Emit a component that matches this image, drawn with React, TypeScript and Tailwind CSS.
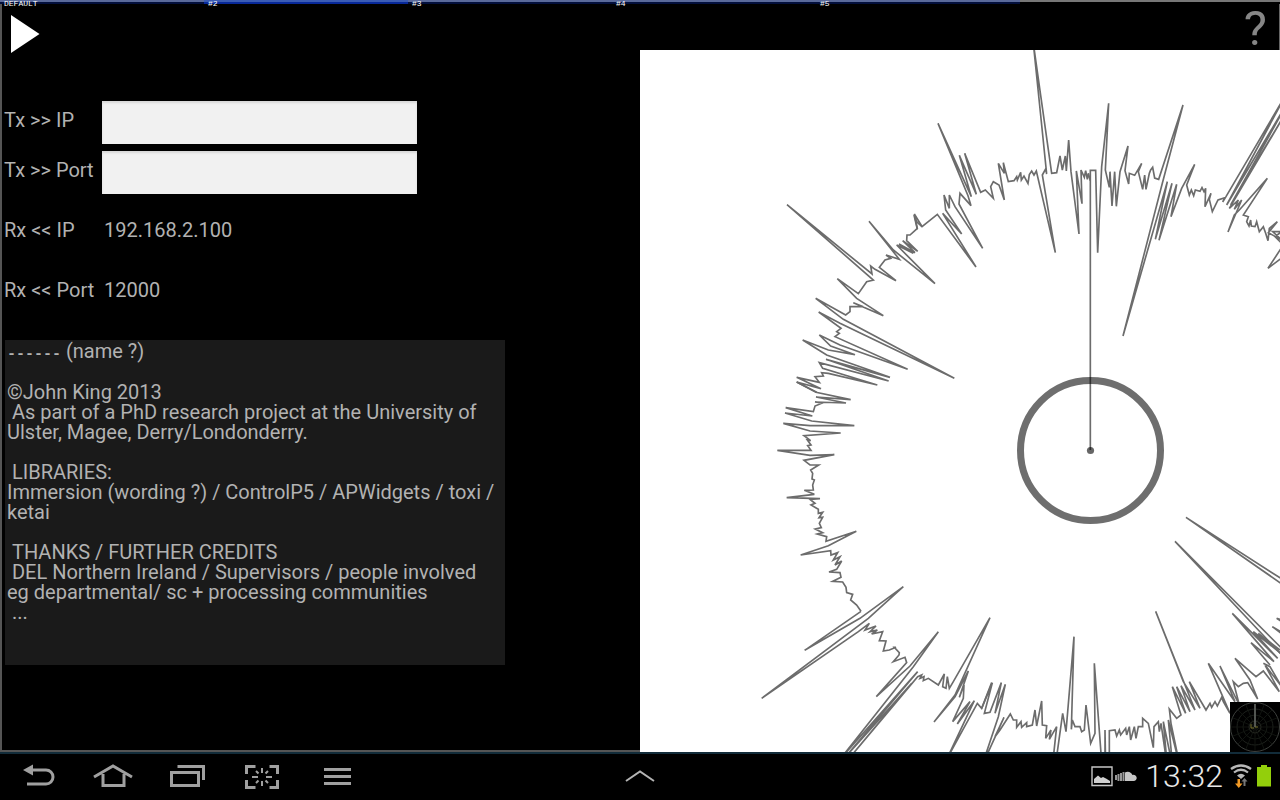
import React from "react";

type Trace = { x: number; y: number; points: string };

// Each trace is plotted at three units per pixel from its own origin.
const traces: Trace[] = [
  {
    x: 900,
    y: 50,
    points:
      "571,1200 571,361 587,361 593,608 605,350 626,160 616,360 628,412 630,365 636,468 644,365 649,469 660,365 684,288 675,362 686,402 688,370 704,376 725,340 715,365 728,418 734,375 738,418 748,370 752,360 758,352 764,384 776,388 849,165 787,400 669,858 802,395 766,568 816,400 777,571 830,403 813,500 845,415 884,343 860,405 868,435 874,420 881,437 886,420 900,424 906,413 912,425 917,415 915,470 933,430 928,448 937,485 954,450 975,443 968,456 978,440 1160,130 980,465 1170,145 992,465 1180,150 988,475 1015,450 1003,478 1025,450 984,546 1003,495 1018,480 1102,385 1030,495 1045,500 1040,515 1047,528 1052,510 1054,528 1065,530 1070,515 1078,545 1090,530 1097,550 1104,572 1108,535 1132,515 1105,548 1145,570 1118,545 1145,545 1125,560 1150,585 1104,655 1150,620",
  },
  {
    x: 900,
    y: 50,
    points:
      "571,392 565,370 562,388 557,362 553,382 543,360 546,461 529,363 537,552 513,365 506,270 499,363 496,318 487,360 480,318 470,368 455,370 400,-20 440,372 437,357 427,375 466,608 409,363 402,375 395,363 388,374 384,400 372,378 364,390 362,367 352,390 350,380 342,392 325,395 310,338 313,370 295,340 313,450 297,405 280,395 272,410 280,445 256,420 242,427 194,310 229,433 178,316 214,440 114,220 204,437 213,467 180,430 177,462 248,595 165,470 148,435 148,475 132,435 137,480 185,552 128,490 228,651 112,493 66,530 50,515 42,495 52,538",
  },
  {
    x: 760,
    y: 190,
    points:
      "485,108 463,72 472,115 450,135 441,135 440,152 473,184 428,152 465,188 417,162 460,190 410,165 525,281 400,180 327,94 418,208 378,195 392,205 375,210 358,232 408,272 345,238 332,228 336,252 81,44 340,270 320,275 295,311 232,266 290,325 370,377 280,338 310,350 270,350 270,365 257,375 167,325 250,388 583,565 240,400 176,366 243,415 230,425 238,430 225,440 443,538 240,465 178,435 212,468 285,494 205,480 128,450 200,495 390,562 198,508 386,573 178,518 188,535 352,585 205,550 185,548 190,558 165,560 178,577 110,562 183,596 110,576 170,607",
  },
  {
    x: 760,
    y: 380,
    points:
      "110,6 168,37 272,59 168,51 258,69 165,66 187,69 165,78 160,95 77,83 157,108 75,99 155,123 283,137 150,137 70,130 150,153 242,159 132,167 152,182 142,180 153,195 143,197 153,211 52,211 150,226 223,224 132,241 150,255 176,255 152,270 158,280 156,297 163,300 158,315 160,330 133,331 163,343 80,353 180,356 150,358 165,370 153,375 175,388 175,400 188,397 177,413 188,412 178,430 184,443 166,447 188,458 172,462 200,470 198,484 289,454 205,497 122,525 212,512 213,525 233,518 220,540 240,530 225,555 245,543 230,568 207,576 240,578 243,592 218,604 248,606 258,622 260,638 278,643 272,660 290,675 303,694",
  },
  {
    x: 740,
    y: 570,
    points:
      "363,124 194,241 360,145 490,50 385,145 65,385 355,185 388,160 375,180 408,168 390,185 412,180 395,192 428,185 418,212 438,213 430,243 448,240 468,232 463,232 478,248 477,255 460,275 495,262 500,278 409,380 510,288 595,185 520,290 300,568 533,305 310,568 515,340 325,568 533,320 545,315 540,325 552,320 550,332 565,325 595,345 613,312 608,350 618,355 622,320 628,355 640,335 750,143 645,375 582,456 645,380 685,303 658,382 672,345 670,385 638,455 690,395 652,462 703,392 620,568 712,400 725,415 755,338",
  },
  {
    x: 980,
    y: 580,
    points:
      "5,385 37,308 13,400 30,397 64,308 45,400 76,313 55,410 5,560 72,412 45,470 60,450 91,402 100,420 110,420 110,442 123,425 125,442 140,428 140,440 157,435 165,390 170,438 185,363 187,435 200,437 197,475 213,450 208,478 230,440 217,560 230,530 248,400 258,455 282,170 274,448 277,420 285,440 300,440 305,455 313,450 318,375 332,490 345,460 343,250 366,560 375,560 375,450 377,560 388,560 388,452 405,450 410,468 418,450 422,465 437,445 440,465 448,440 452,480 463,440 468,475 475,440 488,440 488,415 505,430 520,503 522,440 535,425 538,455 543,430 562,560 550,425 578,560 565,420 600,560 573,430 568,387 590,415 603,405 577,320 617,400 590,320 630,395 603,317 645,390 527,94 610,305 660,385 628,305 678,390 690,370 695,382 705,365 712,378 725,352 730,365 750,400 685,250 765,365 720,258 778,375 760,305 775,320 790,310 803,308 833,357 810,300 765,235 828,290 850,273 898,335 855,255 905,320 870,260 850,250",
  },
  { x: 980, y: 580, points: "910,230 585,-116 910,210" },
  { x: 980, y: 580, points: "910,0 618,-188 910,15" },
  {
    x: 980,
    y: 580,
    points:
      "870,255 813,188 882,245 757,100 893,235 820,155 905,222 835,160 900,210",
  },
  { x: 980, y: 580, points: "910,122 890,115 905,125" },
  { x: 980, y: 580, points: "910,165 877,140 910,160" },
];

const tabs = ["DEFAULT", "#2", "#3", "#4", "#5"];

const credits = `

©John King 2013
 As part of a PhD research project at the University of Ulster, Magee, Derry/Londonderry.

 LIBRARIES:
Immersion (wording ?) / ControlP5 / APWidgets / toxi / ketai

 THANKS / FURTHER CREDITS
 DEL Northern Ireland / Supervisors / people involved eg departmental/ sc + processing communities
 ...`;

function TabStrip() {
  return (
    <nav aria-label="Views" className="flex h-1 shrink-0 items-start bg-linear-to-b from-[#777] from-50% to-black to-50%">
      {tabs.map((tab, i) => (
        <button
          key={tab}
          className={`h-2 w-[204px] pl-1 text-left font-['Liberation_Mono',monospace] text-[8px] leading-2 text-white ${
            i === 1
              ? "bg-[linear-gradient(to_bottom,#3b5cb4_2px,#08299a_2px,#08299a_4px,transparent_4px)]"
              : "bg-[linear-gradient(to_bottom,#5a6a9a_2px,#020f3c_2px,#020f3c_4px,transparent_4px)]"
          }`}
        >
          {tab}
        </button>
      ))}
    </nav>
  );
}

function Scope() {
  return (
    <div className="relative min-h-0 flex-1 overflow-hidden bg-white">
      <svg
        viewBox="640 50 640 702"
        preserveAspectRatio="xMidYMid slice"
        className="absolute inset-0 h-full w-full"
        role="img"
        aria-label="Radial waveform"
      >
        {traces.map((t, i) => (
          <g key={i} transform={`translate(${t.x} ${t.y}) scale(0.33333)`}>
            <polyline points={t.points} fill="none" stroke="#6c6c6c" strokeWidth="5" />
          </g>
        ))}
        <circle cx="1090.5" cy="450.5" r="70" fill="none" stroke="#000" strokeOpacity="0.57" strokeWidth="7" />
        <circle cx="1090.5" cy="450.5" r="3.6" fill="#000" fillOpacity="0.6" />
      </svg>
      <svg viewBox="0 0 50 50" className="absolute right-0 bottom-0 size-[50px] bg-black" fill="none" role="img" aria-label="Overview">
        <circle cx="25" cy="25" r="24.5" stroke="#4d504d" strokeWidth="0.8" />
        <circle cx="25" cy="25" r="18" stroke="#1d211c" />
        <circle cx="25" cy="25" r="12" stroke="#151914" />
        <circle cx="25" cy="25" r="6" stroke="#2b2f26" />
        <path
          d="M1 25H49M25 1V49M8 8 42 42M42 8 8 42M15.800 2.800 34.200 47.200M34.200 2.800 15.800 47.200M2.800 15.800 47.200 34.200M2.800 34.200 47.200 15.800"
          stroke="#141813"
          strokeWidth="0.8"
        />
        <path d="M25 2V25" stroke="#6a6e6a" strokeWidth="1.5" />
        <path d="M21 22V26H24M25 25h3" stroke="#77722c" />
      </svg>
    </div>
  );
}

function NavButton({ label, children }: { label: string; children: React.ReactNode }) {
  return (
    <button aria-label={label} className="flex h-11 w-[75px] items-center justify-center">
      <svg width="40" height="26" viewBox="0 0 40 26" fill="none" stroke="#a0a0a0" strokeWidth="3">
        {children}
      </svg>
    </button>
  );
}

function SystemBar() {
  return (
    <footer className="grid h-12 shrink-0 grid-cols-[1fr_auto_1fr] items-start border-t-2 border-[#122c3a] bg-black">
      <div className="flex">
        <NavButton label="Back">
          <path d="M10 7H28A6.600 6.600 0 0 1 28 21H9" />
          <path d="M5 7 15 1.500V12.500Z" fill="#a0a0a0" stroke="none" />
        </NavButton>
        <NavButton label="Home">
          <path d="M1 14 20 3 39 14M10 11V22.500H31V11" />
        </NavButton>
        <NavButton label="Recent apps">
          <path d="M3.500 9.500H30.500V22.500H3.500ZM9.500 3.500H35.500V17" />
        </NavButton>
        <NavButton label="Capture screen">
          <path d="M3.500 11V3.500H12.500M26.500 3.500H34.500V11M34.500 17V24.500H26.500M12.500 24.500H3.500V17" />
          <path
            d="M19 5V10M19 18V23M9 14H15M23 14H29M13 8 15.500 10.500M25 8 22.500 10.500M13 20 15.500 17.500M25 20 22.500 17.500"
            strokeWidth="2"
          />
        </NavButton>
        <NavButton label="Menu">
          <path d="M6 6.500H33M6 13.500H33M6 20.500H33" />
        </NavButton>
      </div>
      <button aria-label="Expand" className="flex h-11 w-[75px] items-center justify-center">
        <svg width="30" height="14" viewBox="0 0 30 14" fill="none" stroke="#b4b4b4" strokeWidth="2">
          <path d="M1 12 15 2.500 29 12" />
        </svg>
      </button>
      <div className="flex h-11 items-center justify-end pr-[9px]">
        <svg width="22" height="22" viewBox="0 0 22 22" className="mr-0.5" aria-hidden="true">
          <path d="M1 2H21V20.500H1Z" fill="none" stroke="#c6c6c6" strokeWidth="1.400" />
          <path d="M3 18V14L7 10.500 10 13 12 12 15 13.500 19 16V18Z" fill="#d0d0d0" />
        </svg>
        <svg width="22" height="12" viewBox="0 0 22 12" aria-hidden="true">
          <path d="M1 5V10M3.500 4V11M6 3V11M8.500 2V11" stroke="#999" strokeWidth="2" />
          <path d="M10 11V2.500A5 5 0 0 1 17.500 5 3.100 3.100 0 1 1 18.500 11Z" fill="#c6c6c6" />
        </svg>
        <time className="ml-2 text-[32px] leading-10 font-light text-[#e8e8e8]">13:32</time>
        <svg width="24" height="26" viewBox="0 0 24 26" className="ml-1.5" fill="none" aria-hidden="true">
          <path d="M2 6Q12-1 22 6" stroke="#b8b8b8" strokeWidth="2.400" />
          <path d="M5 9.500Q12 4 19 9.500" stroke="#b8b8b8" strokeWidth="2.200" />
          <path d="M8 12.500Q12 9 16 12.500L12 16Z" fill="#b8b8b8" />
          <path d="M8.500 16V20.500H6L9.800 25 13.500 20.500H11V16Z" fill="#f39a25" />
          <path d="M14.500 23V18.500H12.500L15.500 15 18.500 18.500H16.500V23Z" fill="#777" />
        </svg>
        <svg width="14" height="22" viewBox="0 0 14 22" className="ml-1" aria-hidden="true">
          <path d="M4 0H10V2H14V21.500H0V2H4Z" fill="#93cf0b" />
        </svg>
      </div>
    </footer>
  );
}

export default function App() {
  return (
    <div className="flex h-screen flex-col bg-black font-['Roboto',sans-serif] text-[#b2b2b2]">
      <TabStrip />
      <main className="flex min-h-0 flex-1">
        <section className="w-1/2 border-b-2 border-l-2 border-[#555] text-[20px] leading-5">
          <button aria-label="Play" className="block h-24 w-12 pl-[9px]">
            <svg width="29" height="38" viewBox="0 0 29 38" className="-mt-9">
              <path d="M0 0 28.500 19 0 38Z" fill="#fff" />
            </svg>
          </button>
          <form className="pl-[2px]">
            <div className="flex h-[50px] items-start">
              <label htmlFor="tx-ip" className="w-[98px] leading-10">
                Tx &gt;&gt; IP
              </label>
              <input
                id="tx-ip"
                className="mt-px h-[43px] w-[315px] bg-[#f1f1f1] px-2 text-black shadow-[inset_0_2px_2px_#d8d8d8] outline-none"
              />
            </div>
            <div className="flex h-[50px] items-start">
              <label htmlFor="tx-port" className="w-[98px] leading-10">
                Tx &gt;&gt; Port
              </label>
              <input
                id="tx-port"
                className="mt-px h-[43px] w-[315px] bg-[#f1f1f1] px-2 text-black shadow-[inset_0_2px_2px_#d8d8d8] outline-none"
              />
            </div>
            <div className="flex h-[60px] items-center">
              <span className="w-[100px]">Rx &lt;&lt; IP</span>
              <output>192.168.2.100</output>
            </div>
            <div className="flex h-[60px] items-center">
              <span className="w-[100px]">Rx &lt;&lt; Port</span>
              <output>12000</output>
            </div>
          </form>
          <p className="mt-5 ml-[3px] h-[325px] w-[500px] bg-[#1a1a1a] pt-px pr-2 pl-[2px] whitespace-pre-wrap">
            <span className="font-['Liberation_Mono',monospace] text-[15px] leading-none font-bold">------</span>
            {" (name ?)"}
            {credits}
          </p>
        </section>
        <section className="flex w-1/2 flex-col">
          <header className="flex h-[46px] shrink-0 items-center justify-end border-r border-[#666] pt-1 pr-3">
            <button aria-label="Help" className="text-[49px] leading-10 text-[#868686]">
              ?
            </button>
          </header>
          <Scope />
        </section>
      </main>
      <SystemBar />
    </div>
  );
}
